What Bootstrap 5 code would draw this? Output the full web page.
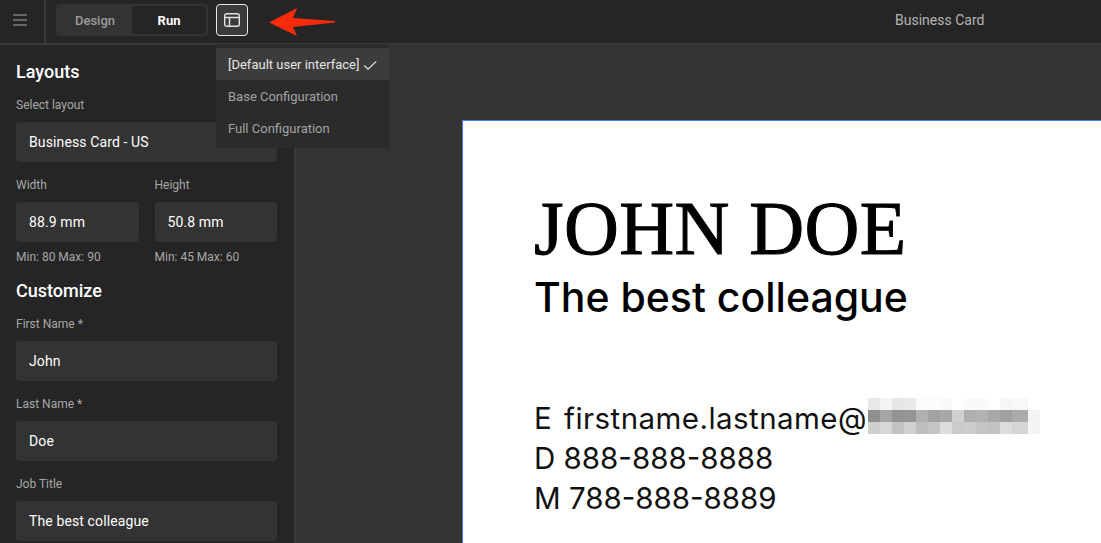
<!DOCTYPE html>
<html lang="en"><head><meta charset="utf-8">
<link rel="stylesheet" href="https://cdn.jsdelivr.net/npm/bootstrap@5.3.0/dist/css/bootstrap.min.css">
<style>
html,body{height:100%;overflow:hidden}
body{background:#333;font-family:Roboto,"Liberation Sans",sans-serif;color:#fff}
.app-shell{height:543px;width:1101px;overflow:hidden}
.top-strip{height:45px;background:#252525;border-bottom:2px solid #3a3a3a}
.burger-cell{width:46px;height:43px;border-right:2px solid #3a3a3a;padding:0 0 4px 13px}
.mode-switch{height:32px;background:#333;border-radius:4px;padding:2px;margin:4px 0 0 10px;width:152px}
.mode-btn{height:28px;width:74px;font-size:13px;font-weight:500;border-radius:4px;color:#9c9c9c;border:0;background:none;padding:1px 0 0}
.mode-r{background:#252525;color:#fff;font-weight:700}
.layout-toggle{width:32px;height:32px;margin:4px 0 0 8px;border:1px solid #e6e6e6;border-radius:4px;background:#3a3a3a;padding:0}
.doc-title{font-size:14px;color:#b4b4b4;left:895px;top:12px;line-height:17px}
.pointer-arrow{left:268px;top:6px}
.side-col{width:296px;background:#252525;border-right:2px solid #3a3a3a;padding:15px 17px 0 16px;height:498px;overflow:hidden}
.sect-h{font-size:18px;font-weight:500;line-height:24px;margin:0}
.fld-lbl{font-size:12px;color:#a8a8a8;line-height:14px;margin:0 0 10px}
.fld-box{height:40px;background:#333;border-radius:4px;font-size:14px;font-weight:400;letter-spacing:.12px;line-height:41px;padding:0 13px;color:#fff}
.hint-txt{font-size:12px;color:#a8a8a8;line-height:14px;margin-top:8px}
.after-head{margin-top:14px}
.next-fld{margin-top:16px}
.head-second{margin-top:15px}
.stage{background:#333}
.bc-sheet{left:462px;top:120px;width:660px;height:440px;background:#fff;border:1px solid #3f7ff0;border-right:0;border-bottom:0}
.bc-name{left:71px;top:63px;font-family:"Liberation Serif",serif;font-size:76px;line-height:88px;letter-spacing:.4px;color:#000;-webkit-text-stroke:1px #000;white-space:nowrap}
.bc-role{left:71px;top:151px;font-family:Inter,"Open Sans",sans-serif;font-size:41px;font-weight:500;line-height:50px;color:#000;white-space:nowrap}
.bc-lines{left:71px;top:277px;font-family:Inter,"Open Sans",sans-serif;font-size:29.500px;line-height:40px;color:#111;white-space:nowrap}
.mail-txt{margin-left:4px;letter-spacing:.45px}
.mosaic{left:405px;top:277px}
.layout-menu{left:216px;top:44px;width:174px;background:#2b2b2b;border-radius:4px;padding:4px 0;z-index:5}
.menu-row{height:32px;line-height:32px;padding:1px 12px 0;font-size:13px;color:#a3a3a3;white-space:nowrap}
.menu-row.sel{background:#3c3c3c;color:#e6e6e6}
</style></head><body>
<div class="app-shell position-relative">
<div class="top-strip d-flex align-items-start">
 <div class="burger-cell d-flex align-items-center"><svg width="14" height="12" viewBox="0 0 14 12" fill="none" stroke="#a8a8a8" stroke-width="1.200"><path d="M0 1h14M0 6h14M0 11h14"/></svg></div>
 <div class="mode-switch d-flex"><button class="mode-btn">Design</button><button class="mode-btn mode-r">Run</button></div>
 <button class="layout-toggle d-flex align-items-center justify-content-center"><svg width="16" height="14" viewBox="0 0 16 14" fill="none" stroke="#e2e2e2" stroke-width="1.400"><rect x=".7" y=".7" width="14.600" height="12.600" rx="2"/><path d="M.7 4.500h14.600M5.500 4.500v8.800"/></svg></button>
</div>
<svg class="pointer-arrow position-absolute" width="68" height="32" viewBox="0 0 68 32"><path d="M1 16.500 29 2 25 12 67 15 67 16.500 25 21 29 30Z" fill="#f52b0c"/></svg>
<div class="doc-title position-absolute">Business Card</div>
<div class="d-flex">
 <aside class="side-col flex-shrink-0">
  <h2 class="sect-h">Layouts</h2>
  <p class="fld-lbl after-head">Select layout</p>
  <div class="fld-box">Business Card - US</div>
  <div class="d-flex gap-3 next-fld">
   <div class="flex-fill w-50"><p class="fld-lbl">Width</p><div class="fld-box">88.9 mm</div><div class="hint-txt">Min: 80 Max: 90</div></div>
   <div class="flex-fill w-50"><p class="fld-lbl">Height</p><div class="fld-box">50.8 mm</div><div class="hint-txt">Min: 45 Max: 60</div></div>
  </div>
  <h2 class="sect-h head-second">Customize</h2>
  <p class="fld-lbl after-head">First Name *</p><div class="fld-box">John</div>
  <p class="fld-lbl next-fld">Last Name *</p><div class="fld-box">Doe</div>
  <p class="fld-lbl next-fld">Job Title</p><div class="fld-box">The best colleague</div>
 </aside>
 <main class="stage flex-grow-1"></main>
</div>
<div class="layout-menu position-absolute">
 <div class="menu-row sel d-flex align-items-center gap-1">[Default user interface]<svg width="16" height="12" viewBox="0 0 16 12" fill="none" stroke="#e6e6e6" stroke-width="1.300"><path d="M1.500 6.500 5.500 10.500 14.500 2"/></svg></div>
 <div class="menu-row">Base Configuration</div>
 <div class="menu-row">Full Configuration</div>
</div>
<div class="bc-sheet position-absolute">
 <div class="bc-name position-absolute">JOHN DOE</div>
 <div class="bc-role position-absolute">The best colleague</div>
 <div class="bc-lines position-absolute">E <span class="mail-txt">firstname.lastname@</span><br>D 888-888-8888<br>M 788-888-8889</div>
 <svg class="mosaic position-absolute" width="172" height="36" viewBox="0 0 172 36" shape-rendering="crispEdges">
  <g>
   <rect x="0" y="0" width="12" height="12" fill="#e8e8e8"/><rect x="12" y="0" width="12" height="12" fill="#f3f3f3"/><rect x="24" y="0" width="12" height="12" fill="#e6e6e6"/><rect x="36" y="0" width="12" height="12" fill="#e9e9e9"/><rect x="48" y="0" width="12" height="12" fill="#fbfbfb"/><rect x="60" y="0" width="12" height="12" fill="#fcfcfc"/><rect x="72" y="0" width="12" height="12" fill="#f9f9f9"/><rect x="84" y="0" width="12" height="12" fill="#fff"/><rect x="96" y="0" width="12" height="12" fill="#fafafa"/><rect x="108" y="0" width="12" height="12" fill="#fafafa"/><rect x="120" y="0" width="12" height="12" fill="#fff"/><rect x="132" y="0" width="12" height="12" fill="#f6f6f6"/><rect x="144" y="0" width="16" height="12" fill="#f8f8f8"/>
   <rect x="0" y="12" width="12" height="12" fill="#8f8f8f"/><rect x="12" y="12" width="12" height="12" fill="#a5a5a5"/><rect x="24" y="12" width="12" height="12" fill="#939393"/><rect x="36" y="12" width="12" height="12" fill="#959595"/><rect x="48" y="12" width="12" height="12" fill="#b0b0b0"/><rect x="60" y="12" width="12" height="12" fill="#a2a2a2"/><rect x="72" y="12" width="12" height="12" fill="#a8a8a8"/><rect x="84" y="12" width="12" height="12" fill="#d0d0d0"/><rect x="96" y="12" width="12" height="12" fill="#b0b0b0"/><rect x="108" y="12" width="12" height="12" fill="#b2b2b2"/><rect x="120" y="12" width="12" height="12" fill="#a8a8a8"/><rect x="132" y="12" width="12" height="12" fill="#a0a0a0"/><rect x="144" y="12" width="16" height="12" fill="#ababab"/><rect x="160" y="12" width="12" height="12" fill="#f3f3f3"/>
   <rect x="0" y="24" width="12" height="12" fill="#cfcfcf"/><rect x="12" y="24" width="12" height="12" fill="#d8d8d8"/><rect x="24" y="24" width="12" height="12" fill="#c2c2c2"/><rect x="36" y="24" width="12" height="12" fill="#d0d0d0"/><rect x="48" y="24" width="12" height="12" fill="#bdbdbd"/><rect x="60" y="24" width="12" height="12" fill="#c5c5c5"/><rect x="72" y="24" width="12" height="12" fill="#dddddd"/><rect x="84" y="24" width="12" height="12" fill="#cbcbcb"/><rect x="96" y="24" width="12" height="12" fill="#cdcdcd"/><rect x="108" y="24" width="12" height="12" fill="#c4c4c4"/><rect x="120" y="24" width="12" height="12" fill="#c2c2c2"/><rect x="132" y="24" width="12" height="12" fill="#dcdcdc"/><rect x="144" y="24" width="16" height="12" fill="#d5d5d5"/><rect x="160" y="24" width="12" height="12" fill="#f5f5f5"/>
  </g>
 </svg>
</div>
</div>
</body></html>
